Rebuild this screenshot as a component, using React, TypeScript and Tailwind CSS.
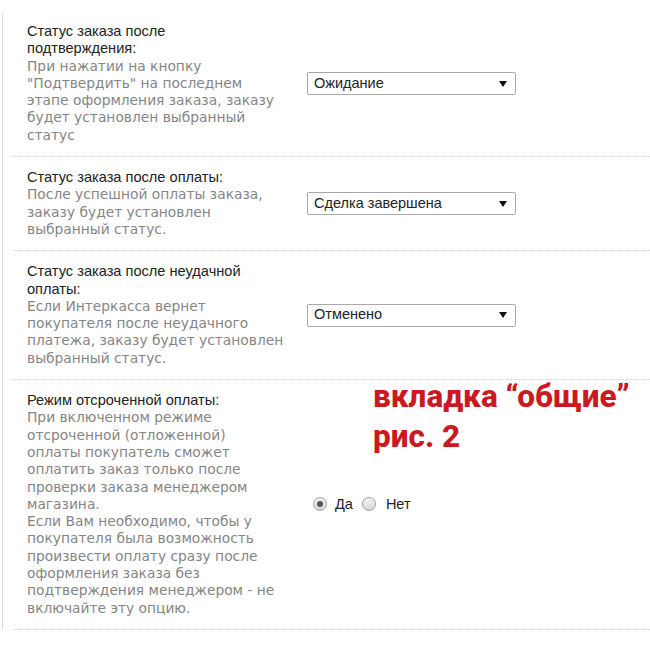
import { ReactNode } from "react";

const titleFont = { fontFamily: '"Liberation Sans", Arial, sans-serif' };
const descFont = { fontFamily: '"DejaVu Sans", Verdana, sans-serif' };

function Row({ title, desc, children, first }: { title: ReactNode; desc: ReactNode; children: ReactNode; first?: boolean }) {
  return (
    <div className={`flex items-center border-b border-dotted border-[#cfcfcf] ${first ? "pt-[10px]" : "pt-[12px]"} pb-[12px]`}>
      <div className="w-[280px] shrink-0 pl-[14px] leading-[17.3px]">
        <div className="text-[14.6px] text-[#222]" style={titleFont}>{title}</div>
        <div className="text-[13.8px] text-[#858585]" style={descFont}>{desc}</div>
      </div>
      <div className="ml-[14px]">{children}</div>
    </div>
  );
}

function FakeSelect({ value }: { value: string }) {
  return (
    <div
      className="flex h-[23px] w-[209px] items-center justify-between rounded-[2px] border border-[#a9a9a9] bg-white pl-[6px] pr-[8px] text-[14.5px] text-[#222]"
      style={titleFont}
    >
      <span>{value}</span>
      <svg width="8" height="6" viewBox="0 0 8 6">
        <path d="M0 0H8L4 6Z" fill="#111" />
      </svg>
    </div>
  );
}

function Radio({ checked }: { checked?: boolean }) {
  return (
    <span className="flex h-[14px] w-[14px] items-center justify-center rounded-full border border-[#a0a0a0] bg-gradient-to-b from-[#f4f4f4] to-[#d6d6d6]">
      {checked && <span className="h-[6px] w-[6px] rounded-full bg-[#555]" />}
    </span>
  );
}

export default function App() {
  return (
    <div className="relative min-h-[650px] w-[650px] bg-white pt-[13px] pl-[2px]">
      <div className="border-l border-[#dcdcdc] pl-[10px]">
        <Row
          first
          title={<>Статус заказа после<br />подтверждения:</>}
          desc={<>При нажатии на кнопку<br />"Подтвердить" на последнем<br />этапе оформления заказа, заказу<br />будет установлен выбранный<br />статус</>}
        >
          <FakeSelect value="Ожидание" />
        </Row>
        <Row
          title={<>Статус заказа после оплаты:</>}
          desc={<>После успешной оплаты заказа,<br />заказу будет установлен<br />выбранный статус.</>}
        >
          <FakeSelect value="Сделка завершена" />
        </Row>
        <Row
          title={<>Статус заказа после неудачной<br />оплаты:</>}
          desc={<>Если Интеркасса вернет<br />покупателя после неудачного<br />платежа, заказу будет установлен<br />выбранный статус.</>}
        >
          <FakeSelect value="Отменено" />
        </Row>
        <Row
          title={<>Режим отсроченной оплаты:</>}
          desc={<>При включенном режиме<br />отсроченной (отложенной)<br />оплаты покупатель сможет<br />оплатить заказ только после<br />проверки заказа менеджером<br />магазина.<br />Если Вам необходимо, чтобы у<br />покупателя была возможность<br />произвести оплату сразу после<br />оформления заказа без<br />подтверждения менеджером - не<br />включайте эту опцию.</>}
        >
          <div className="flex items-center pl-[6px] text-[14.5px] text-[#222]" style={titleFont}>
            <Radio checked />
            <span className="ml-[8px]">Да</span>
            <span className="ml-[9px]"><Radio /></span>
            <span className="ml-[10px]">Нет</span>
          </div>
        </Row>
      </div>
      <div
        className="absolute left-[373px] top-[377px] text-[31.5px] font-extrabold leading-[40px] text-[#cc1820]"
        style={{ fontFamily: 'Roboto, "Open Sans", sans-serif' }}
      >
        вкладка “общие”
        <br />
        рис. 2
      </div>
    </div>
  );
}
